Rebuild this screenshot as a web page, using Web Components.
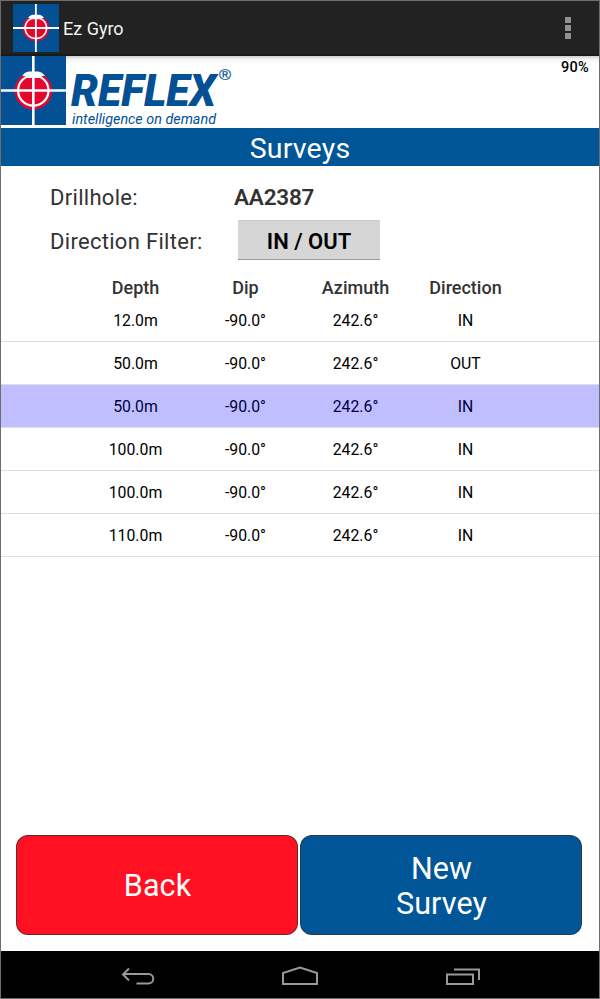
<!DOCTYPE html>
<html lang="en">
<head>
<meta charset="utf-8">
<title>Ez Gyro</title>
<style>
html,body{margin:0;height:100%}
body{font-family:Roboto,"Liberation Sans",sans-serif;background:#fff}
</style>
</head>
<body>
<gyro-app></gyro-app>
<script>
const define = (name, html, setup) => {
  const t = document.createElement('template');
  t.innerHTML = html;
  customElements.define(name, class extends HTMLElement {
    constructor() {
      super();
      this.attachShadow({mode: 'open'}).append(t.content.cloneNode(true));
    }
    connectedCallback() { if (setup) setup(this, this.shadowRoot); }
  });
};

define('target-mark', `
<style>:host{display:block}svg{display:block;width:100%;height:100%}</style>
<svg viewBox="0 0 65 69" preserveAspectRatio="none">
  <rect width="65" height="69" fill="#035194"/>
  <circle cx="32.3" cy="34.8" r="18.8" fill="#e4062c"/>
  <path d="M32.3 0V69M0 34.5H65" stroke="#fff" stroke-width="2.6" fill="none"/>
  <circle cx="32.3" cy="34.5" r="15.2" fill="none" stroke="#fff" stroke-width="2.2"/>
  <path d="M21 19.800Q24 16.200 27.500 15.600H37.500Q41 16.200 44 19.800Q41 19.200 39 22H26Q24 19.200 21 19.800Z" fill="#fff"/>
</svg>`);

define('app-bar', `
<style>
:host{display:flex;align-items:center;box-sizing:border-box;height:55px;padding:0 28px 0 12px;background:#222;border-bottom:2px solid #191919;color:#f3f3f3}
target-mark{width:46px;height:48px;margin-top:1px}
.t{flex:1;margin-left:4px;font-size:18px;line-height:24px;margin-top:3px}
.m{display:grid;gap:2px;margin-top:0}
.m i{width:6px;height:6px;background:#919191}
</style>
<target-mark></target-mark><div class="t"><slot></slot></div><div class="m"><i></i><i></i><i></i></div>`);

define('brand-band', `
<style>
:host{display:flex;justify-content:space-between;height:72px;background:linear-gradient(#ccc,#f2f2f2 3px,#fff 8px)}
target-mark{width:65px;height:69px}
.l{display:flex}
svg{display:block}
.b{font:500 14.5px/20px Roboto,sans-serif;color:#000;padding:2px 10px 0 0;letter-spacing:.3px}
</style>
<div class="l"><target-mark></target-mark>
<svg width="170" height="72" fill="#035194">
  <text x="5" y="49.500" font-family="Roboto" font-weight="900" font-style="italic" font-size="44" textLength="145" lengthAdjust="spacingAndGlyphs">REFLEX</text>
  <text x="153" y="23.500" font-family="Liberation Sans" font-size="15" textLength="12" lengthAdjust="spacingAndGlyphs" stroke="#035194" stroke-width=".2">®</text>
  <text x="6" y="68" font-family="Roboto" font-style="italic" font-size="15.5" textLength="144" lengthAdjust="spacingAndGlyphs">intelligence on demand</text>
</svg></div>
<div class="b"><slot></slot></div>`);

define('title-band', `
<style>:host{display:block;height:38px;background:#005697;color:#fff;text-align:center;font-size:28.5px;line-height:41px;letter-spacing:.2px}</style><slot></slot>`);

define('survey-filters', `
<style>
:host{display:grid;grid-template-columns:184px auto;justify-content:start;grid-template-rows:52px 44px;align-items:center;padding:2px 0 0 49px;height:96px;font-size:22.5px;color:#333;margin-bottom:10px}
.k{padding-top:6px;font-size:22px;letter-spacing:.3px}.v{padding-top:6px;font-weight:600;letter-spacing:-.2px}
.r{padding-top:0;margin-top:-2px}
button{display:block;width:142px;height:40px;margin:-5px 0 0 4px;padding:4px 0 0;border:0;border-bottom:1px solid #999;border-top:1px solid #ccc;background:#d6d6d6;font:600 22px/30px Roboto,sans-serif;letter-spacing:0;color:#000}
</style>
<div class="k">Drillhole:</div><div class="v">AA2387</div>
<div class="k r">Direction Filter:</div><button>IN / OUT</button>`);

define('survey-row', `
<style>
:host{display:grid;grid-template-columns:repeat(4,110px);justify-content:center;align-items:center;text-align:center;box-sizing:border-box;height:43px;padding:1px 0 0 1px;border-bottom:1px solid #ddd;font-size:15.8px;line-height:19px;color:#000}
:host([selected]){background:#bfbfff;color:#000040}
:host([head]){height:25px;padding-top:2px;border:0;font-size:18px;line-height:21px;font-weight:500;color:#333}
</style>`, (el, root) => {
  for (const v of el.getAttribute('values').split('|')) {
    const s = document.createElement('span');
    s.textContent = v;
    root.append(s);
  }
});

define('action-button', `
<style>
:host{display:flex;align-items:center;justify-content:center;text-align:center;box-sizing:border-box;width:282px;height:100px;border-radius:12px;border:1.5px solid rgba(50,50,50,.75);background:var(--fill);color:#fff;font-size:30.5px;line-height:35px;letter-spacing:.1px;padding:1px 0 0 1px}
</style><span><slot></slot></span>`);

define('nav-bar', `
<style>:host{display:block;height:47px;background:#000}svg{display:block}</style>
<svg width="598" height="47" fill="none" stroke="#999" stroke-width="2">
  <path d="M128 17.500L122 23.500L128 29.500M122 23H147.500a4.700 4.700 0 0 1 0 9.500H135.500"/>
  <path d="M282 33V22L299 16.500L316 22V33Z"/>
  <path d="M446 23.500H472V33H446ZM453 18.500H478V29"/>
</svg>`);

define('gyro-app', `
<style>
:host{display:flex;flex-direction:column;box-sizing:border-box;width:600px;height:999px;border:1px solid #6d6d6d;background:#fff;overflow:hidden}
.rows{flex:1}
.actions{display:flex;gap:2px;padding:0 0 16px 15px}
</style>
<app-bar>Ez Gyro</app-bar>
<brand-band>90%</brand-band>
<title-band>Surveys</title-band>
<survey-filters></survey-filters>
<div class="rows">
<survey-row head values="Depth|Dip|Azimuth|Direction"></survey-row>
<survey-row values="12.0m|-90.0°|242.6°|IN"></survey-row>
<survey-row values="50.0m|-90.0°|242.6°|OUT"></survey-row>
<survey-row selected values="50.0m|-90.0°|242.6°|IN"></survey-row>
<survey-row values="100.0m|-90.0°|242.6°|IN"></survey-row>
<survey-row values="100.0m|-90.0°|242.6°|IN"></survey-row>
<survey-row values="110.0m|-90.0°|242.6°|IN"></survey-row>
</div>
<div class="actions">
<action-button style="--fill:#ff1122">Back</action-button>
<action-button style="--fill:#005697">New<br>Survey</action-button>
</div>
<nav-bar></nav-bar>`);
</script>
</body>
</html>
